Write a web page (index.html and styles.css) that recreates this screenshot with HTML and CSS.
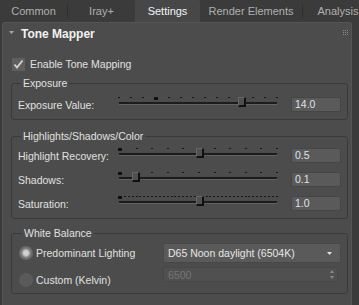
FILE: index.html
```html
<!DOCTYPE html>
<html>
<head>
<meta charset="utf-8">
<link rel="stylesheet" href="styles.css">
</head>
<body>
<div class="tabs">
  <div class="tab w67">Common</div>
  <div class="sep"></div>
  <div class="tab w67">Iray+</div>
  <div class="tab w65 active">Settings</div>
  <div class="tab w102">Render Elements</div>
  <div class="sep"></div>
  <div class="tab w70">Analysis</div>
</div>
<div class="panel">
  <div class="header">
    <svg class="caret" width="5" height="3" viewBox="0 0 5 3"><polygon points="0,0 5,0 2.5,3" fill="#a4a4a4"/></svg>
    <span class="title">Tone Mapper</span>
    <svg class="grip" width="5" height="5" viewBox="0 0 5 5" fill="#8c8c8c">
      <rect x="0" y="0" width="1" height="1"/><rect x="2" y="0" width="1" height="1"/><rect x="4" y="0" width="1" height="1"/>
      <rect x="0" y="2" width="1" height="1"/><rect x="2" y="2" width="1" height="1"/><rect x="4" y="2" width="1" height="1"/>
      <rect x="0" y="4" width="1" height="1"/><rect x="2" y="4" width="1" height="1"/><rect x="4" y="4" width="1" height="1"/>
    </svg>
  </div>
  <div class="check-row">
    <span class="checkbox"><svg width="13" height="13" viewBox="0 0 13 13"><path d="M2.5 6.5 L5 9.5 L10.5 2.5" fill="none" stroke="#d2d2d2" stroke-width="1.8"/></svg></span>
    <span class="label">Enable Tone Mapping</span>
  </div>

  <fieldset class="group g1">
    <legend>Exposure</legend>
    <div class="row">
      <span class="label">Exposure Value:</span>
      <div class="slider">
        <div class="ticks">
          <i></i><i></i><i></i><b></b><i></i><i></i><i></i><i></i><i></i><i></i><i></i><i></i><i></i><i></i>
        </div>
        <div class="track"></div>
        <div class="thumb" style="left:121px"></div>
      </div>
      <div class="num">14.0</div>
    </div>
  </fieldset>

  <fieldset class="group g2">
    <legend>Highlights/Shadows/Color</legend>
    <div class="row">
      <span class="label">Highlight Recovery:</span>
      <div class="slider">
        <div class="ticks">
          <b></b><i></i><i></i><i></i><i></i><i></i><i></i><i></i><i></i><i></i><i></i>
        </div>
        <div class="track"></div>
        <div class="thumb" style="left:79px"></div>
      </div>
      <div class="num">0.5</div>
    </div>
    <div class="row">
      <span class="label">Shadows:</span>
      <div class="slider">
        <div class="ticks">
          <b></b><i></i><i></i><i></i><i></i><i></i><i></i><i></i><i></i><i></i><i></i>
        </div>
        <div class="track"></div>
        <div class="thumb" style="left:15px"></div>
      </div>
      <div class="num">0.1</div>
    </div>
    <div class="row">
      <span class="label">Saturation:</span>
      <div class="slider">
        <div class="ticks dense">
          <b></b><i></i><i></i><i></i><i></i><i></i><i></i><i></i><i></i><i></i><i></i><i></i><i></i><i></i><i></i><i></i><i></i><i></i><i></i><i></i><i></i><i></i><i></i><i></i><i></i><i></i><i></i><i></i><i></i><i></i><i></i><i></i><i></i><i></i><i></i><i></i><i></i><i></i><i></i><i></i><i></i>
        </div>
        <div class="track"></div>
        <div class="thumb" style="left:79px"></div>
      </div>
      <div class="num">1.0</div>
    </div>
  </fieldset>

  <fieldset class="group g3">
    <legend>White Balance</legend>
    <div class="wb">
      <div class="wb-left">
        <div class="radio-row first">
          <span class="radio on"></span>
          <span class="label">Predominant Lighting</span>
        </div>
        <div class="radio-row second">
          <span class="radio"></span>
          <span class="label">Custom (Kelvin)</span>
        </div>
      </div>
      <div class="wb-right">
        <div class="dropdown">
          <span>D65 Noon daylight (6504K)</span>
          <svg width="5" height="3" viewBox="0 0 5 3"><polygon points="0,0 5,0 2.5,3" fill="#e2e2e2"/></svg>
        </div>
        <div class="kelvin">
          <span>6500</span>
          <svg width="4" height="9" viewBox="0 0 4 9" fill="#8a8a8a"><polygon points="0,3 4,3 2,0"/><polygon points="0,6 4,6 2,9"/></svg>
        </div>
      </div>
    </div>
  </fieldset>
</div>
</body>
</html>
```
FILE: styles.css
```css
html, body {
  margin: 0;
  padding: 0;
}
body {
  width: 359px;
  height: 305px;
  overflow: hidden;
  background: #3b3b3b;
  font-family: "Liberation Sans", Arial, sans-serif;
  font-size: 10.5px;
  color: #e0e0e0;
}

/* tabs */
.tabs {
  display: flex;
  height: 22px;
  white-space: nowrap;
}
.tab {
  flex: 0 0 auto;
  text-align: center;
  line-height: 23px;
  color: #b0b0b0;
  font-size: 11px;
}
.w67 { width: 67px; }
.w65 { width: 65px; }
.w102 { width: 102px; }
.w70 { width: 70px; }
.tab.active {
  background: #474747;
  color: #f4f4f4;
  border-radius: 2px 2px 0 0;
}
.sep {
  flex: 0 0 1px;
  height: 14px;
  margin-top: 4px;
  background: #2f2f2f;
}

/* panel */
.panel {
  margin: 0 7px 0 2px;
  height: 283px;
  box-sizing: border-box;
  background: #4c4c4c;
  border: 1px solid #555555;
  border-bottom: none;
  border-radius: 3px 3px 0 0;
}
.header {
  height: 21px;
  display: flex;
  align-items: center;
  padding-left: 6px;
}
.caret {
  margin-right: 7px;
  margin-top: -2px;
}
.title {
  font-weight: bold;
  font-size: 12px;
  color: #f2f2f2;
}
.grip {
  margin-left: auto;
  margin-right: 3px;
  margin-top: -3px;
}
.check-row {
  margin-top: 13px;
  height: 14px;
  display: flex;
  align-items: center;
  padding-left: 9px;
}
.checkbox {
  width: 13px;
  height: 13px;
  background: #5f5f5f;
  display: block;
}
.checkbox svg { display: block; }
.check-row .label {
  margin-left: 5px;
}

/* groups */
.group {
  margin: 0 3px 0 8px;
  padding: 0 6px 7px 6px;
  border: 1px solid #3a3a3a;
  border-radius: 3px;
  min-width: 0;
}
.group legend {
  padding: 0 2px;
  margin-left: 3px;
  line-height: 13px;
  color: #e0e0e0;
}
.g1 { margin-top: 6px; padding-top: 7px; }
.g2 { margin-top: 10px; padding-top: 5px; }
.g3 { margin-top: 8px; padding-top: 3px; padding-left: 7px; padding-bottom: 6px; }

.row {
  display: grid;
  grid-template-columns: 99px 162px 50px;
  column-gap: 0;
  align-items: center;
  height: 15px;
}
.g2 .row + .row { margin-top: 9px; }
.row .num { margin-left: 12px; }
.row .label { white-space: nowrap; }

.slider {
  position: relative;
  height: 15px;
}
.ticks {
  display: flex;
  justify-content: space-between;
  align-items: flex-start;
  height: 3px;
  margin: 0 1px;
}
.ticks i {
  display: block;
  width: 2px;
  height: 1px;
  background: #161616;
}
.ticks b {
  display: block;
  width: 4px;
  height: 3px;
  background: #111111;
}
.track {
  margin: 2px 2px 0;
  height: 2px;
  background: #1c1c1c;
  border-bottom: 1px solid #626262;
}
.thumb {
  position: absolute;
  top: 0;
  width: 8px;
  height: 10px;
  box-sizing: border-box;
  background: #505050;
  border-left: 1px solid #666666;
  border-top: 1px solid #666666;
  border-right: 2px solid #111111;
  border-bottom: 2px solid #111111;
}
.num {
  width: 50px;
  height: 15px;
  box-sizing: border-box;
  background: #5a5a5a;
  border: 1px solid #454545;
  padding-left: 3px;
  line-height: 13px;
  color: #dfe4ea;
}

/* white balance */
.wb {
  display: flex;
}
.wb-left {
  width: 144px;
}
.radio-row {
  display: flex;
  align-items: center;
  white-space: nowrap;
}
.radio-row.first { height: 20px; }
.radio-row.second { height: 14px; margin-top: 10px; }
.radio {
  width: 14px;
  height: 14px;
  border-radius: 50%;
  background: #5a5a5a;
  margin-right: 3px;
  flex: 0 0 14px;
}
.radio.on {
  background: radial-gradient(circle, #d6d6d6 0, #cccccc 2.5px, #9a9a9a 3.8px, #737373 5px, #676767 7px);
}
.wb-right {
  width: 178px;
  display: flex;
  flex-direction: column;
  gap: 4px;
}
.dropdown {
  height: 20px;
  box-sizing: border-box;
  background: #5a5a5a;
  border: 1px solid #474747;
  border-radius: 1px;
  display: flex;
  align-items: center;
  justify-content: space-between;
  padding: 0 8px 0 4px;
  color: #e6e6e6;
  white-space: nowrap;
}
.kelvin {
  width: 175px;
  height: 15px;
  box-sizing: border-box;
  background: #505050;
  border: 1px solid #474747;
  display: flex;
  align-items: center;
  justify-content: space-between;
  padding: 0 3px 0 4px;
  color: #767676;
}
.kelvin svg { display: block; }
```
